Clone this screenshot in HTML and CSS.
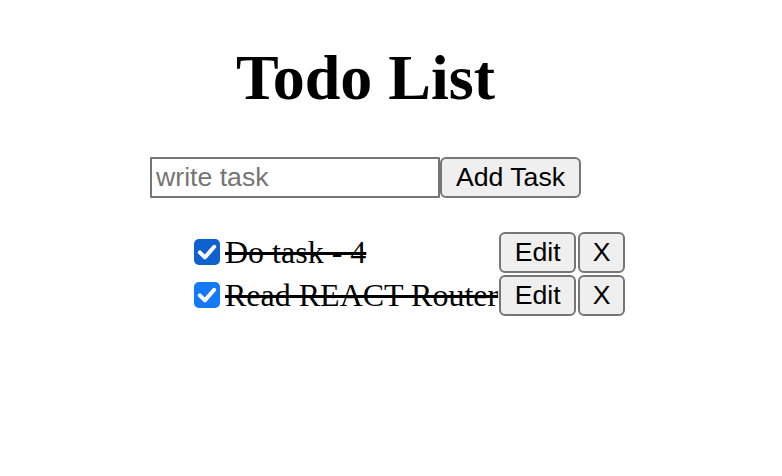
FILE: index.html
```html
<!DOCTYPE html>
<html lang="en">
<head>
<meta charset="utf-8">
<title>Todo List</title>
<link rel="stylesheet" href="styles.css">
</head>
<body>
<div class="app">
  <h1 class="title">Todo List</h1>
  <form class="add-form" onsubmit="return false">
    <input class="task-input" type="text" placeholder="write task"><button class="btn add-btn" type="submit">Add Task</button>
  </form>
  <div class="list">
    <div class="row">
      <span class="check check-hover"><svg viewBox="0 0 26 26" width="26" height="26"><rect x="0" y="0" width="26" height="26" rx="5" class="box"/><path d="M5.8 13.4 L10.9 18.4 L20.2 7.8" fill="none" stroke="#fff" stroke-width="4" stroke-linecap="round" stroke-linejoin="round"/></svg></span>
      <span class="task done">Do task - 4</span>
      <span class="actions"><button class="btn">Edit</button><button class="btn x-btn">X</button></span>
    </div>
    <div class="row">
      <span class="check"><svg viewBox="0 0 26 26" width="26" height="26"><rect x="0" y="0" width="26" height="26" rx="5" class="box"/><path d="M5.8 13.4 L10.9 18.4 L20.2 7.8" fill="none" stroke="#fff" stroke-width="4" stroke-linecap="round" stroke-linejoin="round"/></svg></span>
      <span class="task done">Read REACT Router</span>
      <span class="actions"><button class="btn">Edit</button><button class="btn x-btn">X</button></span>
    </div>
  </div>
</div>
</body>
</html>
```

FILE: styles.css
```css
html, body {
  margin: 0;
  padding: 0;
  background: #ffffff;
}

body {
  font-family: "Liberation Serif", "Times New Roman", serif;
  color: #000;
}

.app {
  width: 731px;
  display: flex;
  flex-direction: column;
  align-items: center;
}

.title {
  font-family: "Liberation Serif", "Times New Roman", serif;
  font-size: 64px;
  font-weight: bold;
  line-height: normal;
  margin: 41px 0 42px 0;
}

.add-form {
  display: flex;
  margin: 0;
}

.task-input {
  box-sizing: border-box;
  width: 290px;
  height: 41px;
  margin: 0;
  border: 2px solid #767676;
  border-radius: 1px;
  padding: 0 4px;
  font-family: "Liberation Sans", Arial, sans-serif;
  font-size: 26.67px;
  color: #000;
  background: #fff;
  outline: none;
}

.task-input::placeholder {
  color: #757575;
}

.btn {
  box-sizing: border-box;
  height: 41px;
  margin: 0;
  padding: 0 12px;
  border: 2px solid #767676;
  border-radius: 6px;
  background: #efefef;
  font-family: "Liberation Sans", Arial, sans-serif;
  font-size: 26.67px;
  color: #000;
  line-height: 1;
}

.add-btn {
  width: 141px;
}

.list {
  align-self: flex-start;
  margin: 33px 0 0 194px;
  display: grid;
  grid-template-columns: auto auto auto;
  grid-auto-rows: 43px;
  align-items: center;
}

.row {
  display: contents;
}

.check {
  display: block;
  width: 26px;
  height: 26px;
  margin-right: 5px;
  margin-top: -1px;
}

.check svg {
  display: block;
}

.check .box {
  fill: #1479f4;
}

.check-hover .box {
  fill: #0f61d0;
}

.task {
  font-size: 32px;
  line-height: normal;
  white-space: nowrap;
}

.done {
  text-decoration: line-through;
}

.actions {
  display: flex;
  gap: 2px;
  padding-left: 1px;
}

.actions .btn {
  width: 77px;
}

.actions .x-btn {
  width: 47px;
}
```
